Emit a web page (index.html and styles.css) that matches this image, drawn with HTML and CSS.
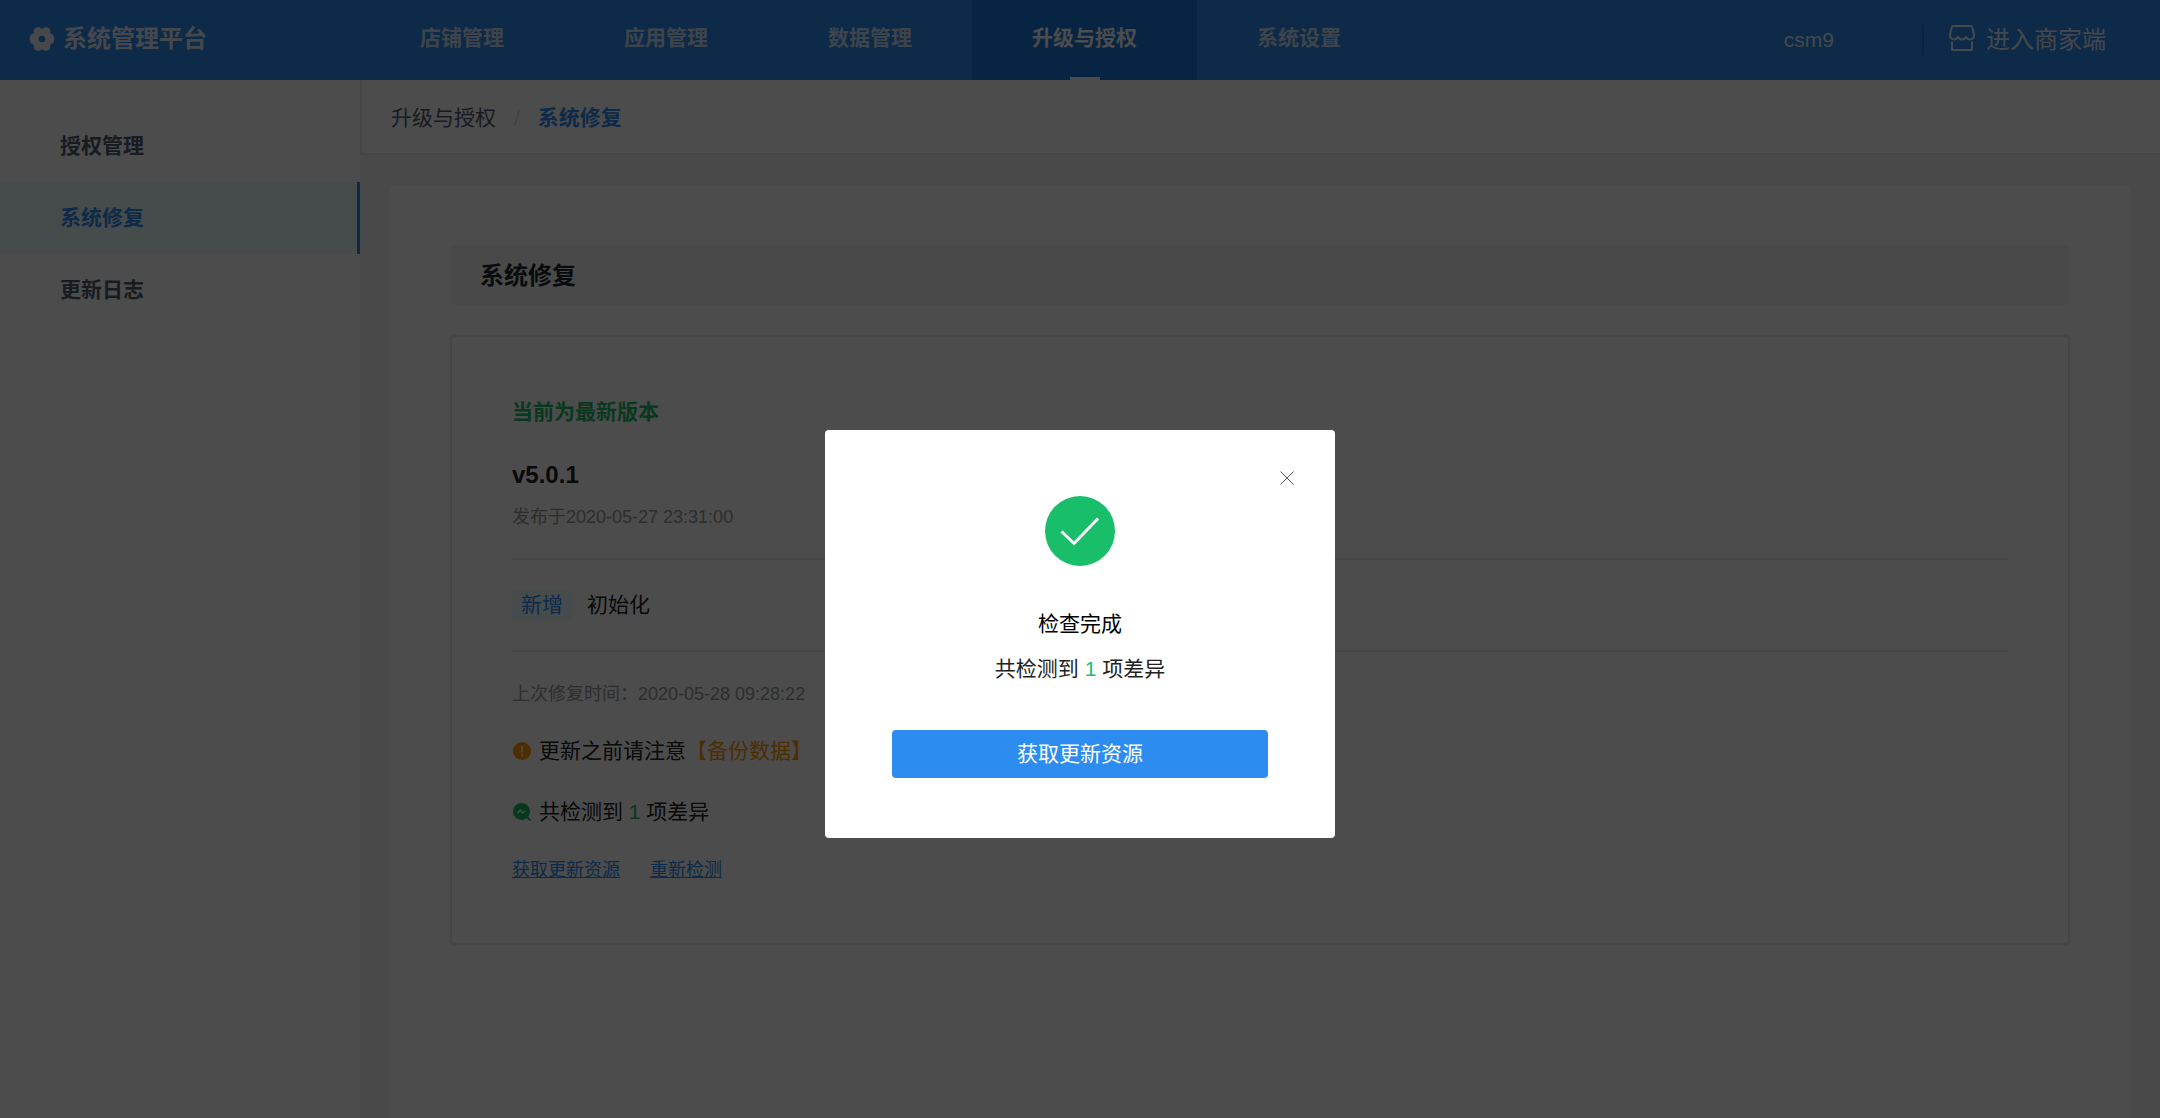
FILE: index.html
```html
<!DOCTYPE html>
<html lang="zh-CN">
<head>
<meta charset="utf-8">
<meta name="viewport" content="width=device-width, initial-scale=1">
<title>系统管理平台</title>
<link rel="stylesheet" href="styles.css">
</head>
<body>
<div class="app">
  <header class="header">
    <a class="brand" href="#">
      <svg class="brand-icon" viewBox="0 0 26 26" aria-hidden="true">
        <path fill="currentColor" fill-rule="evenodd" d="M8 1.2h2.6Q13 4.2 15.400 1.200H18Q21.200 2.400 21.300 5.200Q20.800 8.300 24 8.600Q26.600 13 24 17.400Q20.800 17.700 21.300 20.800Q21.200 23.600 18 24.800H15.400Q13 21.800 10.600 24.800H8Q4.800 23.600 4.700 20.800Q5.200 17.700 2 17.400Q-.6 13 2 8.600Q5.200 8.300 4.700 5.200Q4.800 2.400 8 1.200ZM13 9.700a3.300 3.300 0 1 0 0 6.600a3.300 3.300 0 0 0 0-6.600Z"/>
      </svg>
      <span>系统管理平台</span>
    </a>
    <nav class="nav">
      <a class="nav-item" href="#">店铺管理</a>
      <a class="nav-item" href="#">应用管理</a>
      <a class="nav-item" href="#">数据管理</a>
      <a class="nav-item active" href="#">升级与授权</a>
      <a class="nav-item" href="#">系统设置</a>
    </nav>
    <div class="account">
      <span class="user">csm9</span>
      <a class="merchant" href="#">
        <svg class="shop-icon" viewBox="0 0 26 26" fill="none" stroke="currentColor" stroke-width="2" stroke-linejoin="round" aria-hidden="true">
          <path d="M4.500 1h17Q23 1 23.300 2.500L25 9.500Q25.200 14.500 21 14.500Q18.500 14.500 17 12Q15.500 14.500 13 14.500Q10.500 14.500 9 12Q7.500 14.500 5 14.500Q.8 14.500 1 9.500L2.700 2.500Q3 1 4.500 1ZM3 16.500V25H23V16.500"/>
        </svg>
        <span>进入商家端</span>
      </a>
    </div>
  </header>

  <div class="body">
    <aside class="sidebar">
      <a class="side-item" href="#">授权管理</a>
      <a class="side-item active" href="#">系统修复</a>
      <a class="side-item" href="#">更新日志</a>
    </aside>
    <main class="main">
      <div class="breadcrumb">
        <a href="#">升级与授权</a>
        <span class="slash">/</span>
        <span class="current">系统修复</span>
      </div>
      <section class="card">
        <h1 class="title">系统修复</h1>
        <div class="panel">
          <p class="status">当前为最新版本</p>
          <h2 class="version">v5.0.1</h2>
          <p class="muted">发布于2020-05-27 23:31:00</p>
          <div class="change">
            <span class="tag">新增</span>
            <span>初始化</span>
          </div>
          <p class="muted">上次修复时间：2020-05-28 09:28:22</p>
          <p class="note">
            <svg class="note-icon warn" viewBox="0 0 18 18" aria-hidden="true">
              <circle cx="9" cy="9" r="9" fill="currentColor"/>
              <path class="cut" d="M9 3.800v6.700M9 12.200v2" stroke-width="1.600"/>
            </svg>
            <span>更新之前请注意<span class="warn">【备份数据】</span></span>
          </p>
          <p class="note found">
            <svg class="note-icon ok" viewBox="0 0 18 18" aria-hidden="true">
              <circle cx="8.500" cy="8.500" r="8.500" fill="currentColor"/>
              <path d="M13.500 13.500L17.500 17.500" stroke="currentColor" stroke-width="1.800"/>
              <path class="cut" d="M4 9.300H5.600L7.300 7L9.600 10.200L11.200 8.500H13" stroke-width="1.200"/>
            </svg>
            <span>共检测到 <span class="ok">1</span> 项差异</span>
          </p>
          <div class="links">
            <a href="#">获取更新资源</a>
            <a href="#">重新检测</a>
          </div>
        </div>
      </section>
    </main>
  </div>
</div>

<div class="mask">
  <div class="modal" role="dialog" aria-modal="true" aria-labelledby="modal-title">
    <button class="close" type="button" aria-label="关闭">
      <svg viewBox="0 0 14 14" fill="none" stroke="currentColor" aria-hidden="true"><path d="M.5 .5L13.500 13.500M13.500 .5L.5 13.500"/></svg>
    </button>
    <svg class="success" viewBox="0 0 70 70" aria-hidden="true">
      <circle cx="35" cy="35" r="35" fill="#19be6b"/>
      <path d="M16.500 35.500L29 47.500L53 22.500" fill="none" stroke="#fff" stroke-width="3"/>
    </svg>
    <h2 class="modal-title" id="modal-title">检查完成</h2>
    <p class="modal-text">共检测到 <span class="ok">1</span> 项差异</p>
    <button class="primary" type="button">获取更新资源</button>
  </div>
</div>
</body>
</html>
```
FILE: styles.css
```css
* {
  box-sizing: border-box;
}

body {
  margin: 0;
  color: #222;
  background: #f5f5f5;
  font-family: "Liberation Sans", "Noto Sans CJK SC", sans-serif;
  font-size: 21px;
  line-height: 30px;
}

h1, h2, p {
  margin: 0;
}

a {
  color: inherit;
  text-decoration: none;
}

svg {
  display: block;
  flex: none;
}

.app {
  display: flex;
  flex-direction: column;
  min-height: 100vh;
}

/* Header */
.header {
  display: flex;
  height: 80px;
  color: #fff;
  background: #2d8cf0;
}

.brand {
  display: flex;
  align-items: center;
  gap: 8px;
  width: 360px;
  padding-left: 29px;
  padding-bottom: 3px;
  font-size: 24px;
  font-weight: bold;
  color: rgba(255, 255, 255, .9);
}

.brand-icon {
  width: 26px;
  height: 26px;
}

.nav {
  display: flex;
}

.nav-item {
  position: relative;
  padding: 0 60px;
  line-height: 76px;
  font-weight: bold;
  color: rgba(255, 255, 255, .8);
}

.nav-item.active {
  color: #fff;
  background: #187ae2;
}

.nav-item.active::after {
  content: "";
  position: absolute;
  bottom: 0;
  left: 50%;
  width: 30px;
  height: 3px;
  margin-left: -15px;
  background: #fff;
}

.account {
  display: flex;
  align-items: center;
  gap: 88px;
  margin-left: auto;
  padding-right: 54px;
  color: rgba(255, 255, 255, .9);
}

.merchant {
  display: flex;
  align-items: center;
  gap: 11px;
  padding-left: 25px;
  border-left: 2px solid #187ae2;
  font-size: 24px;
}

.shop-icon {
  width: 26px;
  height: 26px;
  margin-bottom: 4px;
}

/* Page body */
.body {
  display: flex;
  flex: 1;
}

.sidebar {
  width: 360px;
  padding-top: 30px;
  background: #fff;
}

.side-item {
  display: block;
  padding-left: 60px;
  line-height: 72px;
  font-weight: bold;
  color: #515a6e;
}

.side-item.active {
  color: #2d8cf0;
  background: #ebfaff;
  border-right: 3px solid #2d8cf0;
}

.main {
  display: flex;
  flex: 1;
  flex-direction: column;
}

.breadcrumb {
  display: flex;
  align-items: center;
  height: 75px;
  padding-top: 2px;
  padding-left: 29px;
  color: #515a6e;
  background: #fff;
  border-bottom: 2px solid #e8eaec;
  border-left: 2px solid #e8eaec;
}

.slash {
  margin: 0 18px;
  color: #dcdee2;
}

.current {
  font-weight: bold;
  color: #2d8cf0;
}

.card {
  flex: 1;
  margin: 30px 30px 0;
  padding: 60px;
  background: #fff;
  border-radius: 4px 4px 0 0;
}

.title {
  margin-bottom: 30px;
  padding-top: 1px;
  padding-left: 30px;
  border-radius: 4px;
  font-size: 24px;
  line-height: 59px;
  color: #1c2833;
  background: #f5f5f5;
}

.panel {
  padding: 60px 60px 58px;
  border: 2px solid #e8eaec;
  border-radius: 4px;
}

.status {
  font-weight: bold;
  color: #19be6b;
}

.version {
  margin: 30px 0 9px;
  font-size: 24px;
  line-height: 36px;
}

.muted {
  font-size: 18px;
  color: #999;
}

.change {
  display: flex;
  gap: 15px;
  margin: 26px 0 27px;
  padding: 30px 0;
  border: solid #e8eaec;
  border-width: 2px 0;
}

.tag {
  width: 60px;
  border-radius: 4px;
  text-align: center;
  color: #2d8cf0;
  background: #ebfaff;
}

.note {
  display: flex;
  align-items: center;
  gap: 8px;
  margin: 27px 0 31px;
}

.found {
  margin: 0 0 28px;
}

.note-icon {
  width: 18px;
  height: 18px;
  margin-left: 1px;
}

.cut {
  fill: none;
  stroke: #fff;
}

.warn {
  color: #f90;
}

.ok {
  color: #19be6b;
}

.links {
  display: flex;
  gap: 30px;
  font-size: 18px;
  color: #2d8cf0;
}

.links a {
  text-decoration: underline;
}

/* Dialog */
.mask {
  position: fixed;
  inset: 0;
  display: flex;
  align-items: flex-start;
  justify-content: center;
  padding-top: 430px;
  background: rgba(0, 0, 0, .7);
}

.modal {
  position: relative;
  display: flex;
  flex-direction: column;
  align-items: center;
  width: 510px;
  padding: 66px 67px 60px;
  border-radius: 4px;
  background: #fff;
}

.close {
  position: absolute;
  top: 33px;
  right: 33px;
  padding: 8px;
  border: 0;
  color: #555;
  background: none;
}

.close svg {
  width: 14px;
  height: 14px;
}

.success {
  width: 70px;
  height: 70px;
}

.modal-title {
  margin: 43px 0 15px;
  font-size: 21px;
  font-weight: normal;
  color: #000;
}

.modal-text {
  margin-bottom: 46px;
}

.primary {
  align-self: stretch;
  height: 48px;
  padding: 0;
  border: 0;
  border-radius: 4px;
  font: inherit;
  color: #fff;
  background: #2d8cf0;
}
```
